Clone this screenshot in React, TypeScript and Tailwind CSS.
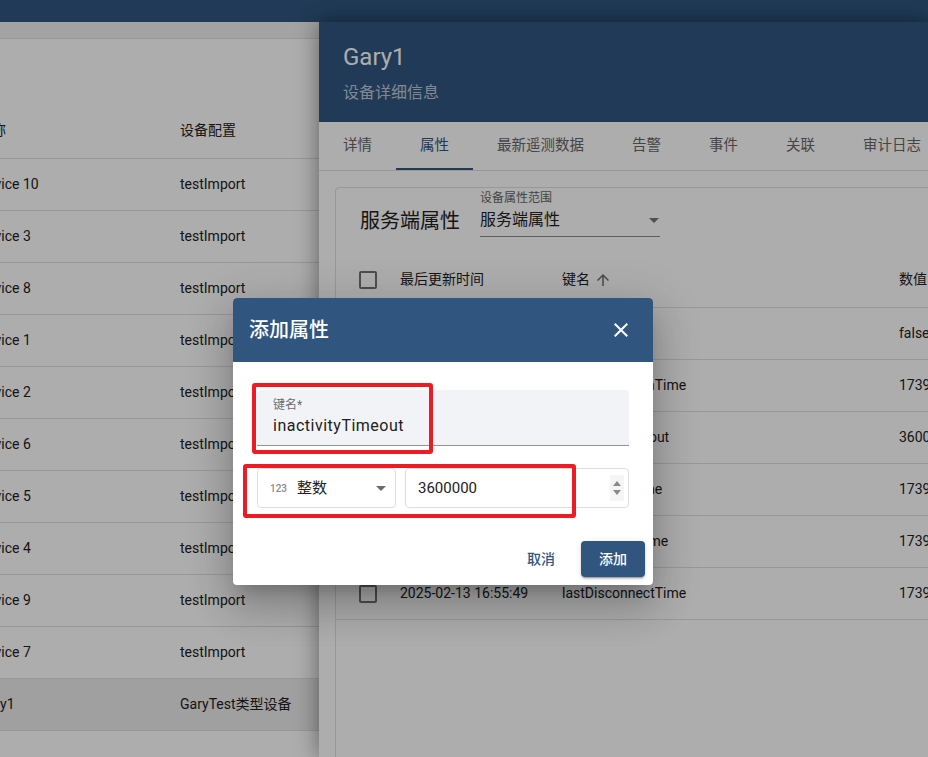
import React from "react";

const leftRows: [string, string][] = [
  ["Device 10", "testImport"],
  ["Device 3", "testImport"],
  ["Device 8", "testImport"],
  ["Device 1", "testImport"],
  ["Device 2", "testImport"],
  ["Device 6", "testImport"],
  ["Device 5", "testImport"],
  ["Device 4", "testImport"],
  ["Device 9", "testImport"],
  ["Device 7", "testImport"],
  ["Gary1", "GaryTest类型设备"],
];

const attrRows: [string, string, string][] = [
  ["2025-02-13 16:55:49", "active", "false"],
  ["2025-02-13 16:55:49", "inactivityAlarmTime", "1739436949123"],
  ["2025-02-13 16:55:49", "inactivityTimeout", "3600000"],
  ["2025-02-13 16:55:49", "lastActivityTime", "1739436949123"],
  ["2025-02-13 16:55:49", "lastConnectTime", "1739436949123"],
  ["2025-02-13 16:55:49", "lastDisconnectTime", "1739436949123"],
];

const tabs = ["详情", "属性", "最新遥测数据", "告警", "事件", "关联", "审计日志"];

function Checkbox() {
  return <div className="w-[18px] h-[18px] border-2 border-[#737373] rounded-[2px]" />;
}

function Caret({ color = "#757575" }: { color?: string }) {
  return (
    <svg width="10" height="5" viewBox="0 0 10 5">
      <path d="M0 0 L5 5 L10 0 Z" fill={color} />
    </svg>
  );
}

export default function App() {
  return (
    <div className="relative w-[928px] h-[757px] overflow-hidden bg-white font-['Roboto','Noto_Sans_CJK_SC',sans-serif] text-[#212121]">
      <div className="h-[22px] bg-[#305680]" />
      <div className="flex h-[735px]">
        {/* Left device table */}
        <div className="w-[319px] shrink-0 overflow-hidden bg-white">
          <div className="h-[17px] bg-[#f0f0f0] border-b border-[#e0e0e0]" />
          <div className="h-[64px]" />
          <div className="ml-[-22px] w-[400px]">
            <div className="grid grid-cols-[202px_1fr] h-[56px] items-center border-b border-[#e0e0e0] text-[14px]">
              <div>名称</div>
              <div>设备配置</div>
            </div>
            {leftRows.map(([n, p]) => (
              <div
                key={n}
                className={`grid grid-cols-[202px_1fr] h-[52px] items-center border-b border-[#e0e0e0] text-[14px] ${n === "Gary1" ? "bg-[#ececec]" : ""}`}
              >
                <div>{n}</div>
                <div>{p}</div>
              </div>
            ))}
          </div>
        </div>

        {/* Right drawer */}
        <div className="relative z-10 flex-1 flex flex-col overflow-hidden bg-white shadow-[0_0_22px_rgba(0,0,0,0.45)]">
          <div className="h-[100px] shrink-0 bg-[#305680] pl-6 flex flex-col">
            <div className="pt-[19px] text-[24px] leading-[32px] text-white">Gary1</div>
            <div className="mt-[8px] text-[16px] leading-[24px] text-white/70">设备详细信息</div>
          </div>
          <div className="h-[49px] shrink-0 border-b border-[#e0e0e0] flex text-[14.5px]">
            {tabs.map((t) => (
              <div
                key={t}
                className={`relative h-full px-6 flex items-center pb-[1px] whitespace-nowrap ${t === "属性" ? "text-[#305680]" : "text-[#666666]"}`}
              >
                {t}
                {t === "属性" && <div className="absolute left-0 right-0 bottom-0 h-[2px] bg-[#305680]" />}
              </div>
            ))}
          </div>
          <div className="p-4 flex-1">
            <div className="w-[720px] h-[620px] border border-[#e0e0e0] rounded-[4px]">
              <div className="h-16 flex items-start pl-6">
                <div className="mt-[19px] text-[20px] leading-[28px]">服务端属性</div>
                <div className="ml-5 mt-[2px] w-[180px] flex flex-col">
                  <div className="text-[12px] leading-[16px] text-[#666666]">设备属性范围</div>
                  <div className="mt-[2px] flex items-center justify-between h-[24px] border-b border-[#8a8a8a] pb-[4px] box-content">
                    <span className="text-[16px] leading-[24px]">服务端属性</span>
                    <span className="mr-[1px]"><Caret /></span>
                  </div>
                </div>
              </div>
              <div className="grid grid-cols-[64px_162px_337px_1fr] h-[56px] items-center border-b border-[#e0e0e0] text-[14px] whitespace-nowrap">
                <div className="pl-[23px]"><Checkbox /></div>
                <div>最后更新时间</div>
                <div className="flex items-center gap-[4px]">
                  键名
                  <svg width="18" height="18" viewBox="0 0 24 24">
                    <path d="M4 12l1.41 1.41L11 7.83V20h2V7.83l5.58 5.59L20 12l-8-8-8 8z" fill="#6b6b6b" />
                  </svg>
                </div>
                <div>数值</div>
              </div>
              {attrRows.map(([d, k, v]) => (
                <div
                  key={k}
                  className="grid grid-cols-[64px_162px_337px_1fr] h-[52px] items-center border-b border-[#e0e0e0] text-[14px] whitespace-nowrap"
                >
                  <div className="pl-[23px]"><Checkbox /></div>
                  <div>{d}</div>
                  <div>{k}</div>
                  <div>{v}</div>
                </div>
              ))}
            </div>
          </div>
        </div>
      </div>

      {/* Backdrop */}
      <div className="absolute inset-0 z-20 bg-black/[0.32]" />

      {/* Dialog */}
      <div className="absolute z-30 left-[233px] top-[298px] w-[420px] bg-white rounded-[4px] overflow-hidden shadow-[0_11px_15px_-7px_rgba(0,0,0,0.2),0_24px_38px_3px_rgba(0,0,0,0.14),0_9px_46px_8px_rgba(0,0,0,0.12)]">
        <div className="h-16 bg-[#305680] flex items-center justify-between pl-4 pr-3">
          <div className="text-[20px] font-medium text-white">添加属性</div>
          <div className="w-10 h-10 flex items-center justify-center">
            <svg width="24" height="24" viewBox="0 0 24 24">
              <path
                d="M19 6.41L17.59 5 12 10.59 6.41 5 5 6.41 10.59 12 5 17.59 6.41 19 12 13.41 17.59 19 19 17.59 13.41 12z"
                fill="#ffffff"
              />
            </svg>
          </div>
        </div>
        <div className="px-6 pt-7">
          <div className="h-[56px] bg-[#f2f3f7] rounded-t-[4px] border-b border-[#949494] px-4 pt-[7px]">
            <div className="text-[12px] leading-[16px] text-[#6b6b6b]">键名*</div>
            <div className="mt-[1px] text-[16px] leading-[24px] tracking-[0.5px] text-[#212121]">inactivityTimeout</div>
          </div>
          <div className="mt-[22px] flex gap-[9px] h-[40px]">
            <div className="w-[139px] h-full border border-[#dedede] rounded-[4px] flex items-center pl-[12px] pr-[9px]">
              <span className="text-[10px] font-medium text-[#8a8a8a] w-[16px]">123</span>
              <span className="ml-[11px] text-[15px] text-[#212121] flex-1">整数</span>
              <Caret color="#6b6b6b" />
            </div>
            <div className="flex-1 h-full border border-[#dedede] rounded-[4px] flex items-center pl-3 pr-[4px]">
              <span className="flex-1 text-[15px] text-[#212121]">3600000</span>
              <div className="w-[14px] h-[26px] bg-[#f5f5f5] flex flex-col items-center justify-center gap-[4px]">
                <svg width="8" height="5" viewBox="0 0 8 5"><path d="M0 5 L4 0 L8 5 Z" fill="#8a8a8a" /></svg>
                <svg width="8" height="5" viewBox="0 0 8 5"><path d="M0 0 L4 5 L8 0 Z" fill="#8a8a8a" /></svg>
              </div>
            </div>
          </div>
        </div>
        <div className="flex justify-end gap-2 px-2 pb-2 pt-[33px]">
          <div className="min-w-[64px] h-[36px] flex items-center justify-center text-[14px] font-medium text-[#305680]">取消</div>
          <div className="min-w-[64px] h-[36px] flex items-center justify-center rounded-[4px] bg-[#305680] text-[14px] font-medium text-white shadow-[0_3px_1px_-2px_rgba(0,0,0,0.2),0_2px_2px_0_rgba(0,0,0,0.14),0_1px_5px_0_rgba(0,0,0,0.12)]">
            添加
          </div>
        </div>
      </div>

      {/* Red annotation boxes */}
      <div className="absolute z-40 left-[252px] top-[383px] w-[181px] h-[71px] border-4 border-[#ed1c24] rounded-[3px]" />
      <div className="absolute z-40 left-[243px] top-[464px] w-[333px] h-[54px] border-4 border-[#ed1c24] rounded-[3px]" />
    </div>
  );
}
